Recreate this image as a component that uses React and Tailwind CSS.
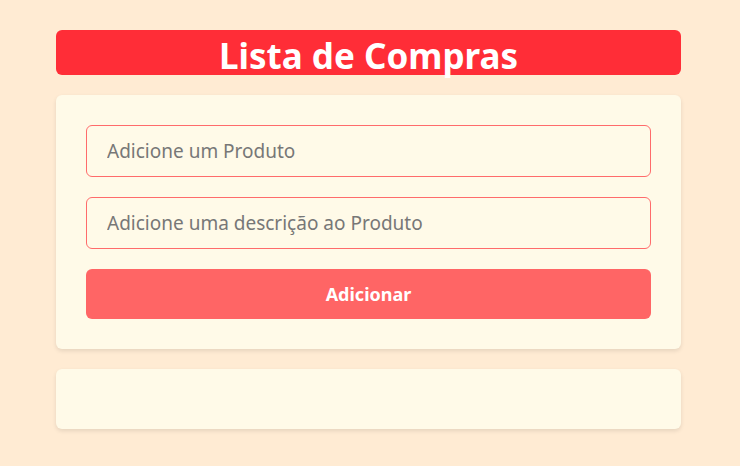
export default function App() {
  return (
    <div className="min-h-[466px] w-full bg-[#ffebd3] pt-[30px] pb-[30px]" style={{ fontFamily: '"Noto Sans", "Open Sans", sans-serif' }}>
      <div className="ml-[56px] w-[625px] flex flex-col gap-[20px]">
        <div className="h-[45px] rounded-[6px] bg-[#ff2d37] flex items-center justify-center">
          <h1 className="text-white font-bold text-[35px] leading-none mt-[5px]">Lista de Compras</h1>
        </div>
        <div className="rounded-[6px] bg-[#fffae8] p-[30px] flex flex-col gap-[20px] shadow-[0_2px_4px_rgba(0,0,0,0.1)]">
          <input
            className="h-[52px] w-full rounded-[6px] border border-[#ff6b6b] bg-transparent px-[20px] text-[19px] text-gray-800 placeholder:text-[#777] outline-none"
            placeholder="Adicione um Produto"
          />
          <input
            className="h-[52px] w-full rounded-[6px] border border-[#ff6b6b] bg-transparent px-[20px] text-[19px] text-gray-800 placeholder:text-[#777] outline-none"
            placeholder="Adicione uma descrição ao Produto"
          />
          <button className="h-[50px] w-full rounded-[6px] bg-[#ff6565] text-white font-bold text-[18px]">
            Adicionar
          </button>
        </div>
        <div className="h-[60px] rounded-[6px] bg-[#fffae8] shadow-[0_2px_4px_rgba(0,0,0,0.1)]"></div>
      </div>
    </div>
  );
}
